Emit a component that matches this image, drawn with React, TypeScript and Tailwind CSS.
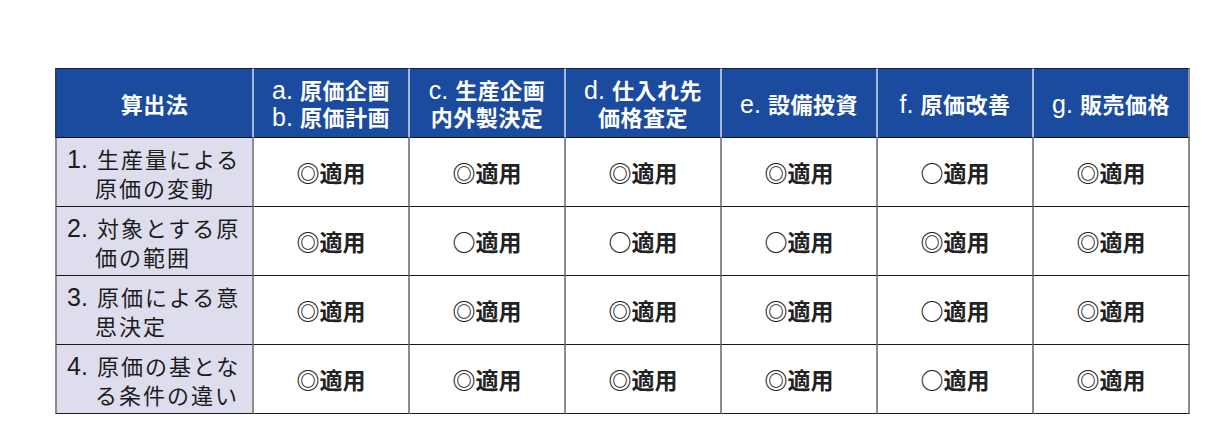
import React from "react";

type H = { p?: string; t: string }[];

const headers: H[] = [
  [{ t: "算出法" }],
  [
    { p: "a.", t: "原価企画" },
    { p: "b.", t: "原価計画" },
  ],
  [{ p: "c.", t: "生産企画" }, { t: "内外製決定" }],
  [{ p: "d.", t: "仕入れ先" }, { t: "価格査定" }],
  [{ p: "e.", t: "設備投資" }],
  [{ p: "f.", t: "原価改善" }],
  [{ p: "g.", t: "販売価格" }],
];

const rows = [
  { n: "1.", l1: "生産量による", l2: "原価の変動", v: ["◎", "◎", "◎", "◎", "○", "◎"] },
  { n: "2.", l1: "対象とする原", l2: "価の範囲", v: ["◎", "○", "○", "○", "◎", "◎"] },
  { n: "3.", l1: "原価による意", l2: "思決定", v: ["◎", "◎", "◎", "◎", "○", "◎"] },
  { n: "4.", l1: "原価の基とな", l2: "る条件の違い", v: ["◎", "◎", "◎", "◎", "○", "◎"] },
];

export default function App() {
  return (
    <div className="w-[1219px] h-[445px] bg-white pt-[68px] pl-[55px] font-['Noto_Sans_CJK_JP',sans-serif]">
      <div className="grid grid-cols-[199px_repeat(6,156px)] grid-rows-[70px_repeat(4,69px)]">
        {headers.map((h, i) => (
          <div
            key={"h" + i}
            className={
              "bg-[#1b4b9f] border-t border-t-[#0f1f3f] border-b border-b-[#111] border-r-2 flex flex-col items-center justify-center text-white " +
              (i === 0 ? "border-l-2 border-l-[#2a3e68] " : "") +
              (i === headers.length - 1 ? "border-r-[#8c8c8c]" : "border-r-[#a7b7d6]")
            }
          >
            {h.map((line, j) => (
              <div key={j} className="flex items-baseline h-[27px] leading-[27px] whitespace-nowrap">
                {line.p && (
                  <span className="text-[25px] leading-[25px] font-normal mr-[7px] font-['Liberation_Sans',sans-serif]">
                    {line.p}
                  </span>
                )}
                <span className="text-[22px] leading-[27px] font-semibold tracking-[0.5px]">{line.t}</span>
              </div>
            ))}
          </div>
        ))}
        {rows.map((r, ri) => (
          <React.Fragment key={"r" + ri}>
            <div className="bg-[#dedded] border-l-2 border-l-[#8c8c8c] border-r-2 border-r-[#8c8c8c] border-b border-b-[#1a1a1a] flex flex-col justify-center pl-[10px] text-[#1c1c1c] text-[22px] leading-[28px]">
              <div className="flex items-baseline whitespace-nowrap">
                <span className="w-[30px] shrink-0 text-[25px] leading-[28px] font-['Liberation_Sans',sans-serif]">
                  {r.n}
                </span>
                <span className="tracking-[2px]">{r.l1}</span>
              </div>
              <div className="pl-[28px] tracking-[2px] whitespace-nowrap">{r.l2}</div>
            </div>
            {r.v.map((v, vi) => (
              <div
                key={vi}
                className="bg-white border-r-2 border-r-[#8c8c8c] border-b border-b-[#1a1a1a] flex items-center justify-center text-[#222] text-[23px] font-semibold"
              >
                {v}適用
              </div>
            ))}
          </React.Fragment>
        ))}
      </div>
    </div>
  );
}
